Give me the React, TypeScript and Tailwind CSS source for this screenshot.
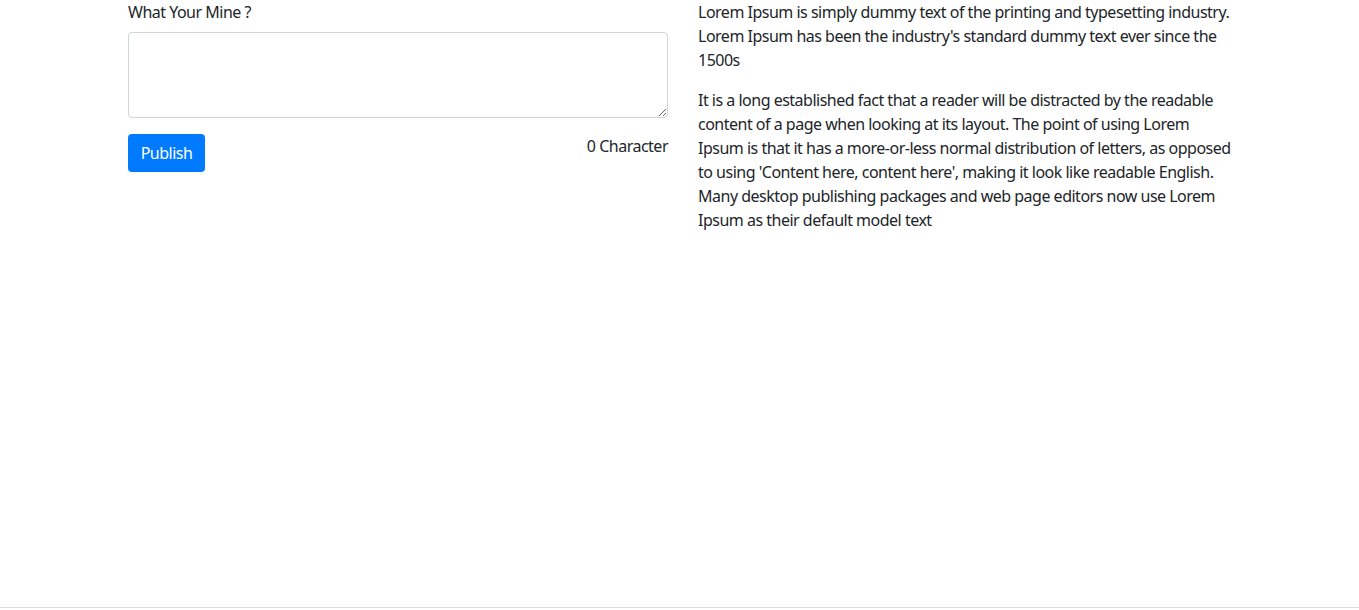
import { useState } from "react";

const FONT = "font-['Segoe_UI','Noto_Sans','Open_Sans',sans-serif] tracking-[-0.5px]";

export default function App() {
    const [text, setText] = useState("");

    return (
        <div className={`${FONT} text-[16px] leading-6 text-[#212529] bg-white`}>
            <div className="h-[607px] w-full">
                <div className="ml-[113px] flex w-[1140px]">
                    {/* left: form */}
                    <div className="w-[570px] px-[15px]">
                        <label className="mb-2 block">What Your Mine ?</label>
                        <textarea
                            value={text}
                            onChange={(e) => setText(e.target.value)}
                            rows={3}
                            className="block h-[86px] w-full resize-y rounded-[4px] border border-[#ced4da] px-3 py-1.5 outline-none"
                        />
                        <div className="mt-4 flex items-start justify-between">
                            <button className="h-[38px] w-[77px] rounded-[4px] bg-[#007bff] text-white">Publish</button>
                            <span>{text.length} Character</span>
                        </div>
                    </div>

                    {/* right: text */}
                    <div className="w-[570px] px-[15px]">
                        <p className="mb-4">
                            Lorem Ipsum is simply dummy text of the printing and typesetting industry. Lorem Ipsum has
                            been the industry's standard dummy text ever since the 1500s
                        </p>
                        <p className="mb-4">
                            It is a long established fact that a reader will be distracted by the readable content of a
                            page when looking at its layout. The point of using Lorem Ipsum is that it has a
                            more-or-less normal distribution of letters, as opposed to using 'Content here, content
                            here', making it look like readable English. Many desktop publishing packages and web page
                            editors now use Lorem Ipsum as their default model text
                        </p>
                    </div>
                </div>
            </div>
            <div className="h-px w-full bg-[#dcdcdc]" />
        </div>
    );
}
